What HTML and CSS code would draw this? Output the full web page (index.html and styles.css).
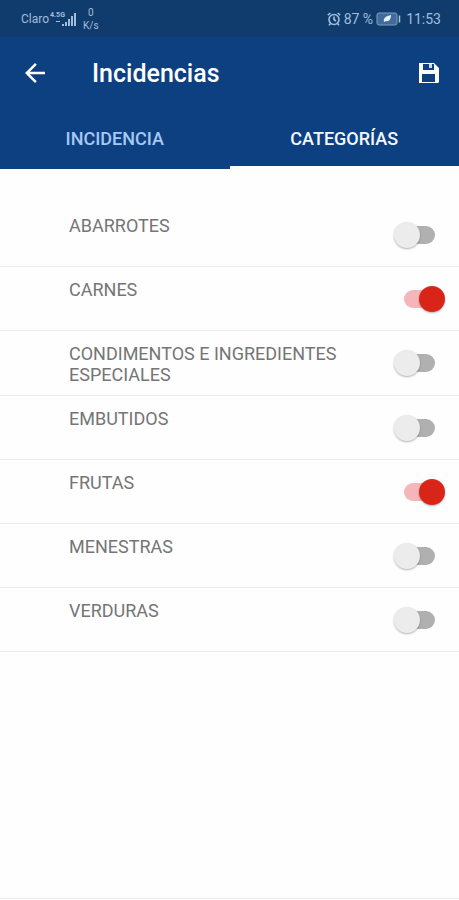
FILE: index.html
```html
<!DOCTYPE html>
<html lang="es">
<head>
    <meta charset="utf-8">
    <meta name="viewport" content="width=device-width, initial-scale=1">
    <title>Incidencias</title>
    <link rel="stylesheet" href="styles.css">
</head>
<body>
    <!-- Status bar -->
    <div class="status-bar">
        <div class="status-left">
            <span>Claro</span>
            <!-- network type sits over the low bars -->
            <span class="network">
                <span class="network-type">4.5G</span>
                <svg width="28" height="16" viewBox="0 0 28 16" fill="currentColor" aria-hidden="true">
                    <path d="M7 10h4v1H7zM13 13h2v2h-2zM16 11h2v4h-2zM19 8h2v7h-2zM22 5h2v10h-2zM25 2h2v13h-2z"/>
                </svg>
            </span>
            <span class="speed">0<br>K/s</span>
        </div>
        <div class="status-right">
            <svg width="14" height="14" viewBox="0 0 14 14" fill="none" stroke="currentColor" stroke-width="1.6" aria-hidden="true">
                <circle cx="7" cy="7.5" r="5"/>
                <path d="M7 4.5v3l2 1.5M.8 3.2L3.4 1M13.2 3.2L10.6 1M3.5 11.5L2 13.3M10.5 11.5L12 13.3"/>
            </svg>
            <span>87 %</span>
            <svg class="battery" width="25" height="14" viewBox="0 0 25 14" aria-hidden="true">
                <rect x="1" y="1" width="20" height="12" rx="2" fill="#416b9b" stroke="#7f9dc2"/>
                <path d="M8 10c-1-4 2-6 7-7 0 4-2 7-5 6z" fill="#e4edf8"/>
                <path d="M23.5 3.5v7" stroke="#a9c0dc" stroke-width="1.5"/>
            </svg>
            <span>11:53</span>
        </div>
    </div>

    <!-- App bar -->
    <header class="app-bar">
        <button class="icon-btn" type="button" aria-label="Volver">
            <svg width="30" height="30" viewBox="0 0 24 24" fill="currentColor">
                <path d="M20 11H7.83l5.59-5.59L12 4l-8 8 8 8 1.41-1.41L7.83 13H20z"/>
            </svg>
        </button>
        <h1 class="title">Incidencias</h1>
        <button class="icon-btn" type="button" aria-label="Guardar">
            <svg width="28" height="28" viewBox="0 0 28 28" fill="currentColor">
                <path fill-rule="evenodd" d="M4 4h15l5 5v14l-1 1H4zM8 5v6h11V5zM7 15v8h13v-8z"/>
                <path d="M14 5h3v4h-3z" opacity="0.8"/>
            </svg>
        </button>
    </header>

    <nav class="tabs" role="tablist">
        <button class="tab" type="button" role="tab" aria-selected="false">INCIDENCIA</button>
        <button class="tab active" type="button" role="tab" aria-selected="true">CATEGORÍAS</button>
    </nav>

    <main class="content">
        <ul class="category-list">
            <li><label class="category"><span>ABARROTES</span><input class="switch" type="checkbox" role="switch"></label></li>
            <li><label class="category"><span>CARNES</span><input class="switch" type="checkbox" role="switch" checked></label></li>
            <li><label class="category"><span>CONDIMENTOS E INGREDIENTES ESPECIALES</span><input class="switch" type="checkbox" role="switch"></label></li>
            <li><label class="category"><span>EMBUTIDOS</span><input class="switch" type="checkbox" role="switch"></label></li>
            <li><label class="category"><span>FRUTAS</span><input class="switch" type="checkbox" role="switch" checked></label></li>
            <li><label class="category"><span>MENESTRAS</span><input class="switch" type="checkbox" role="switch"></label></li>
            <li><label class="category"><span>VERDURAS</span><input class="switch" type="checkbox" role="switch"></label></li>
        </ul>
    </main>
</body>
</html>
```
FILE: styles.css
```css
* {
    box-sizing: border-box;
}

body {
    margin: 0;
    min-height: 100vh;
    display: flex;
    flex-direction: column;
    background: #fefefe;
    font-family: Roboto, "Liberation Sans", sans-serif;
}

button {
    padding: 0;
    border: none;
    background: none;
    color: inherit;
    font: inherit;
    cursor: pointer;
}

svg {
    display: block;
}

/* Status bar */
.status-bar {
    display: flex;
    justify-content: space-between;
    align-items: center;
    height: 37px;
    padding: 0 18px 0 21px;
    background: #103c6d;
    color: #a3bddd;
    font-size: 14px;
}

.status-left,
.status-right {
    display: flex;
    align-items: center;
}

.status-left {
    font-size: 12px;
}

.network {
    position: relative;
}

.network-type {
    position: absolute;
    top: 0;
    left: 1px;
    font-size: 7px;
    line-height: 8px;
    font-weight: 700;
}

.speed {
    margin-left: 6px;
    font-size: 10px;
    line-height: 13px;
    text-align: center;
}

.status-right {
    gap: 3px;
}

.battery {
    margin-right: 2px;
}

/* App bar */
.app-bar {
    display: flex;
    align-items: center;
    height: 72px;
    padding: 0 16px 0 20px;
    background: #0d4080;
    color: #fff;
}

.title {
    flex: 1;
    margin: 0 0 0 42px;
    font-size: 25px;
    font-weight: 500;
}

/* Tabs */
.tabs {
    display: flex;
    background: #0d4080;
}

.tab {
    flex: 1;
    height: 60px;
    padding-top: 2px;
    border-bottom: 3px solid transparent;
    color: #a6c8f3;
    font-size: 18px;
    font-weight: 500;
}

.tab.active {
    border-bottom-color: #fff;
    color: #f3f8ff;
}

/* Category list */
.content {
    flex: 1;
    padding-top: 34px;
    margin-bottom: 1px;
    border-bottom: 1px solid #ececec;
}

.category-list {
    margin: 0;
    padding: 0;
    list-style: none;
}

.category {
    display: flex;
    justify-content: space-between;
    align-items: flex-start;
    gap: 24px;
    min-height: 64px;
    padding: 12px 14px 10px 69px;
    border-bottom: 1px solid #ececec;
    color: #757575;
    font-size: 18px;
    line-height: 21px;
}

/* Switch */
.switch {
    appearance: none;
    position: relative;
    flex: none;
    display: flex;
    align-items: center;
    width: 51px;
    height: 26px;
    margin: 7px 0 0;
    cursor: pointer;
}

/* track */
.switch::before {
    content: "";
    width: 31px;
    height: 18px;
    margin: 0 10px;
    border-radius: 9px;
    background: #b0b0b0;
}

/* thumb */
.switch::after {
    content: "";
    position: absolute;
    top: 0;
    left: 0;
    width: 26px;
    height: 26px;
    border-radius: 50%;
    background: #ececec;
    box-shadow: 0 1px 2px rgba(0, 0, 0, 0.3);
}

.switch:checked::before {
    background: #f4b6b8;
}

.switch:checked::after {
    left: 25px;
    background: #d92518;
}
```
